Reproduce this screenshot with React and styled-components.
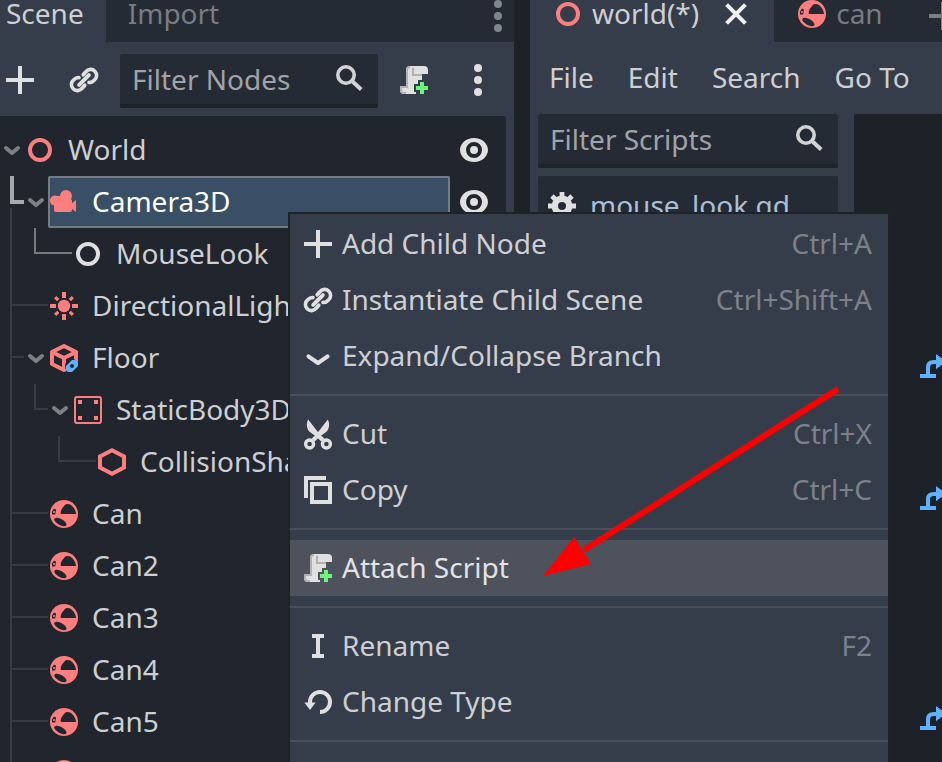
import React from "react";
import styled, { createGlobalStyle } from "styled-components";

const c = {
  base: "#363d4a",
  tabs: "#252b34",
  tree: "#21262e",
  deep: "#1d2229",
  edge: "#1e2328",
  text: "#cdcfd2",
  dim: "#787c83",
  hint: "#a0a3a7",
  icon: "#e0e0e0",
  red: "#fc7f7f",
  guide: "#373b43",
  guideLit: "#75797f",
};

const GlobalStyle = createGlobalStyle`
  *, *::before, *::after { box-sizing: border-box; }
  html, body { margin: 0; background: ${c.deep}; }
  body, button, input {
    font-family: "Noto Sans", "Open Sans", sans-serif;
    font-size: 28px;
    line-height: 38px;
    color: ${c.text};
  }
  button { border: 0; padding: 0; background: none; cursor: pointer; }
  ul { list-style: none; margin: 0; padding: 0; }
`;

/* ---------- icons ---------- */

const Svg = styled.svg`
  display: block;
  flex: none;
  width: 32px;
  height: 32px;
`;

const Icon = ({ children, color = c.icon, ...rest }) => (
  <Svg viewBox="0 0 16 16" fill={color} aria-hidden="true" {...rest}>
    {children}
  </Svg>
);

const AddIcon = (p) => (
  <Icon {...p}><path d="M7 1v6H1v2h6v6h2V9h6V7H9V1z" /></Icon>
);

const LinkIcon = () => (
  <Icon>
    <g fill="none" stroke={c.icon} strokeWidth="2" strokeLinecap="round">
      <path d="M7.6 5.4 8.9 3.9a3 3 0 1 1 4.2 4.2q-1.2 1.3-2.6 1.1" strokeWidth="1.8" />
      <path d="M8.4 10.6 7.1 12.1a3 3 0 1 1-4.2-4.2q1.2-1.3 2.6-1.1" strokeWidth="1.8" />
      <path d="M5.6 10.4 10.4 5.6" />
    </g>
  </Icon>
);

const SearchIcon = () => (
  <Icon>
    <g fill="none" stroke="#d2d3d4">
      <circle cx="6" cy="6" r="4.1" strokeWidth="1.8" />
      <path d="M9 9l4.6 4.2" strokeWidth="2" />
    </g>
  </Icon>
);

const ScriptCreateIcon = () => (
  <Icon>
    <path d="M6 1a2 2 0 0 0-2 2v8H1v2a2 2 0 0 0 2 2h6v-1H8v-4h2V8h2V5h3V3a2 2 0 0 0-2-2z" />
    <path
      fill="#b2b2b2"
      d="M6 1a2 2 0 0 0-2 2v8H1v2a2 2 0 0 0 2 2h1v-1H3a1 1 0 0 1-1-1v-1h3V3a1 1 0 0 1 1-1zM7 2v4h5V5H8V2z"
    />
    <path fill="#6bf57d" d="M11 9v2H9v2h2v2h2v-2h2v-2h-2V9z" />
  </Icon>
);

const DotsIcon = (p) => (
  <Icon {...p}>
    <circle cx="8" cy="2" r="2" />
    <circle cx="8" cy="8" r="2" />
    <circle cx="8" cy="14" r="2" />
  </Icon>
);

const CloseIcon = () => (
  <Icon><path d="M3.3 3.3l9.4 9.4M12.7 3.3l-9.4 9.4" stroke="#f0f0f0" strokeWidth="2" /></Icon>
);

const EyeIcon = () => (
  <Icon>
    <path
      fillRule="evenodd"
      d="M8 2C4 2 1 4.8 1 8s3 6 7 6 7-2.8 7-6-3-6-7-6zm0 2a4 4 0 1 1 0 8 4 4 0 0 1 0-8z"
    />
    <circle cx="8" cy="8" r="2" />
  </Icon>
);

const NodeIcon = ({ color = c.icon }) => (
  <Icon color="none"><circle cx="8" cy="8" r="5" stroke={color} strokeWidth="2" /></Icon>
);

const CameraIcon = () => (
  <Icon color={c.red}>
    <circle cx="9" cy="5" r="3" />
    <circle cx="3.5" cy="7.3" r="2.5" />
    <path d="M3 9l1-4h5l3 2v5a1 1 0 0 1-1 1H4a1 1 0 0 1-1-1z" />
    <path d="M11.5 9 14 7v6l-2.500-2z" />
  </Icon>
);

const LightIcon = () => (
  <Icon color={c.red}>
    <circle cx="8" cy="8" r="3.1" />
    <path d="M7 1h2v3H7zM7 12h2v3H7zM1 7h3v2H1zM12 7h3v2h-3z" />
    <path
      d="M3.6 3.6l1.500 1.500M12.400 3.600l-1.500 1.500M3.600 12.400l1.500-1.500M12.400 12.400l-1.500-1.500"
      stroke={c.red}
      strokeWidth="1.600"
    />
  </Icon>
);

const CubeIcon = () => (
  <Icon>
    <path
      d="M8 2l6 3v6l-6 3-6-3V5zM2 5l6 3 6-3M8 8v6"
      fill="none"
      stroke={c.red}
      strokeWidth="2"
      strokeLinejoin="round"
    />
    <circle cx="12" cy="12" r="3.5" fill={c.tree} />
    <path
      fill="#5fb2ff"
      fillRule="evenodd"
      d="M12 9h1.500a1.500 1.500 0 0 1 1.500 1.500V12l-3 3h-1.500A1.500 1.500 0 0 1 9 13.500V12zm0 2a1 1 0 1 0 0 2 1 1 0 0 0 0-2z"
    />
  </Icon>
);

const StaticBodyIcon = () => (
  <Icon color={c.red}>
    <rect x="1.5" y="1.5" width="13" height="13" rx="1" fill="none" stroke={c.red} />
    <path d="M3 3h2v2H3zM11 3h2v2h-2zM3 11h2v2H3zM11 11h2v2h-2z" />
  </Icon>
);

const CollisionIcon = () => (
  <Icon color="none">
    <path d="M8 2.1l6 3.1v5.6l-6 3.1-6-3.1V5.2z" stroke={c.red} strokeWidth="2" />
  </Icon>
);

const RigidBodyIcon = ({ ground = c.tree }) => (
  <Icon color={c.red}>
    <circle cx="8" cy="8" r="7" />
    <g fill={ground}>
      <path d="M6.4 8C6 6 7.6 4.600 8.500 3.400c.6-.6 2-.6 2.800 0C13 4.600 13.900 6.400 14 8z" />
      <ellipse cx="6.200" cy="12" rx="3.400" ry="1.500" transform="rotate(28 6.200 12)" />
      <path d="M2 8.300V6.700l1-1.500 1 .6-.4 2.500z" />
    </g>
    <circle cx="3" cy="7" r=".5" />
  </Icon>
);

const CutIcon = () => (
  <Icon>
    <path d="M3.1.7C1.9 2.9 2.3 5.7 4.3 7.3L7 9.3l2.7 2.5 1.5-1.5-2.3-2.1z" />
    <path d="M12.9.7c1.2 2.2.8 5-1.2 6.6L9 9.3l-2.7 2.5-1.5-1.5 2.3-2.1z" />
    <g fill="none" stroke={c.icon} strokeWidth="1.7">
      <circle cx="3.8" cy="13" r="2" />
      <circle cx="12.2" cy="13" r="2" />
    </g>
  </Icon>
);

const CopyIcon = () => (
  <Icon color="none">
    <path d="M2 12V2h10" stroke={c.icon} strokeWidth="2" />
    <rect x="5" y="5" width="9" height="9" stroke={c.icon} strokeWidth="2" />
  </Icon>
);

const ChevronIcon = () => (
  <Icon color="none">
    <path d="M3.2 8.2 8 11.5l4.8-3.3" stroke={c.icon} strokeWidth="2" strokeLinecap="round" strokeLinejoin="round" />
  </Icon>
);

const RenameIcon = () => (
  <Icon><path d="M5 2h6v2H9v8h2v2H5v-2h2V4H5z" /></Icon>
);

const ReloadIcon = () => (
  <Icon>
    <path d="M9 13A5 5 0 1 0 4 8v1" fill="none" stroke={c.icon} strokeWidth="2" />
    <path d="M1.2 8.3h5.6L4 12z" />
  </Icon>
);

const GearIcon = () => (
  <Icon>
    <path
      d="M8 1v3M8 12v3M1 8h3M12 8h3M3 3l2 2M11 11l2 2M3 13l2-2M11 5l2-2"
      stroke={c.icon}
      strokeWidth="2.4"
    />
    <circle cx="8" cy="8" r="3.6" fill="none" stroke={c.icon} strokeWidth="3.2" />
  </Icon>
);

const SignalIcon = () => (
  <Icon>
    <path d="M1 12h8v2H1z" fill="#5fb2ff" />
    <path d="M5 12V8.500Q5 6 8 6h1.500" fill="none" stroke="#5fb2ff" strokeWidth="2" />
    <path d="M9 2l5 3.800L9 9.600z" fill="#5fb2ff" />
  </Icon>
);

const FoldSvg = styled.svg`
  display: block;
  width: 24px;
  height: 24px;
`;

const FoldArrow = () => (
  <FoldSvg viewBox="0 0 24 24" fill="none" aria-hidden="true">
    <path d="M6 10l6 5 6-5" stroke="#7d8086" strokeWidth="4" strokeLinecap="round" strokeLinejoin="round" />
  </FoldSvg>
);

/* ---------- frame ---------- */

const Editor = styled.div`
  display: grid;
  grid-template-columns: minmax(0, 514fr) minmax(0, 412fr);
  column-gap: 16px;
  height: 100vh;
  overflow: hidden;
  background: ${c.deep};
`;

const Dock = styled.section`
  display: flex;
  flex-direction: column;
  min-width: 0;
  min-height: 0;
  overflow: hidden;
  background: ${c.base};
`;

const Label = styled.span`
  padding-bottom: 2px;
`;

const TabBar = styled.div`
  display: flex;
  flex: none;
  height: 42px;
  overflow: hidden;
  background: ${c.tabs};
`;

const Tab = styled.div`
  display: flex;
  flex: none;
  align-items: center;
  gap: 8px;
  padding: 0 22px 14px ${(p) => p.$start ?? 22}px;
  background: ${(p) => (p.$active ? c.base : "transparent")};
`;

const TabLabel = styled.button`
  display: flex;
  align-items: center;
  gap: 8px;
  height: 28px;
  white-space: nowrap;
  color: ${(p) => (p.$active ? c.text : c.dim)};
`;

const TabClose = styled.button`
  margin-left: 13px;
`;

const TabAction = styled.button`
  flex: none;
  height: 28px;
  margin-left: ${(p) => (p.$push ? "auto" : "22px")};
`;

const SceneTools = styled.div`
  display: flex;
  flex: none;
  gap: 12px;
  padding: 12px 8px 8px 0;
`;

const ToolButton = styled.button`
  display: flex;
  flex: none;
  align-items: center;
  justify-content: center;
  width: ${(p) => p.$width ?? 48}px;
  height: 52px;
  margin: ${(p) => (p.$flush ? "0 4px 0 -4px" : "0")};
`;

const SearchField = styled.label`
  display: flex;
  flex: 1 1 auto;
  align-items: center;
  min-width: 0;
  height: 54px;
  padding: 0 12px;
  border-bottom: 4px solid ${c.edge};
  border-radius: 2px;
  background: ${c.tabs};
`;

const SearchInput = styled.input`
  flex: 1;
  min-width: 0;
  height: 38px;
  padding: 0;
  border: 0;
  outline: 0;
  background: none;

  &::placeholder {
    color: ${c.hint};
    opacity: 1;
  }
`;

const Search = ({ label }) => (
  <SearchField>
    <SearchInput type="text" placeholder={label} aria-label={label} />
    <SearchIcon />
  </SearchField>
);

/* ---------- scene tree ---------- */

const Tree = styled.ul`
  flex: 1;
  min-height: 0;
  margin-right: 8px !important;
  padding-top: 8px !important;
  overflow: hidden;
  border-radius: 0 2px 0 0;
  background: ${c.tree};
`;

const TreeRow = styled.li`
  display: flex;
  height: 52px;
`;

const Rail = styled.span`
  flex: none;
  width: 14px;
  margin-left: 10px;
  border-left: 2px solid ${(p) => (p.$line ? c.guide : "transparent")};
`;

const Elbow = styled.span`
  display: flex;
  flex: none;
  flex-direction: column;
  width: ${(p) => (p.$short ? 14 : 38)}px;
  margin-left: 10px;
`;

const Corner = styled.span`
  height: ${(p) => (p.$mark === "path" ? 28 : 26)}px;
  border: 0 solid ${(p) => (p.$mark === "path" ? "#a6a9ad" : p.$mark === "child" ? c.guideLit : c.guide)};
  border-width: ${(p) => (p.$mark === "path" ? "0 0 4px 4px" : "0 0 2px 2px")};
`;

const Trunk = styled.span`
  flex: 1;
  margin-top: ${(p) => (p.$gap ? 4 : 0)}px;
  border-left: 2px solid ${c.guide};
`;

const Fold = styled.button`
  display: flex;
  flex: none;
  align-items: center;
  width: 24px;
`;

const Item = styled.div`
  display: flex;
  flex: 1;
  align-items: center;
  gap: 12px;
  min-width: 0;
  overflow: hidden;
  white-space: nowrap;
  color: ${(p) => (p.$selected ? "#ffffff" : c.text)};
  background: ${(p) => (p.$selected ? "#384f66" : "transparent")};
  border-radius: 2px;
  outline: ${(p) => (p.$selected ? "2px solid #777c84" : "0")};
  outline-offset: -2px;
`;

const Visibility = styled.button`
  display: flex;
  flex: none;
  align-items: center;
  width: 56px;
  padding-left: 8px;
`;

const nodes = [
  { name: "World", depth: 0, fold: true, icon: <NodeIcon color={c.red} />, eye: true },
  { name: "Camera3D", depth: 1, fold: true, icon: <CameraIcon />, eye: true, selected: true, mark: "path" },
  { name: "MouseLook", depth: 2, icon: <NodeIcon />, mark: "child" },
  { name: "DirectionalLight3D", depth: 1, icon: <LightIcon /> },
  { name: "Floor", depth: 1, fold: true, icon: <CubeIcon /> },
  { name: "StaticBody3D", depth: 2, fold: true, icon: <StaticBodyIcon /> },
  { name: "CollisionShape3D", depth: 3, icon: <CollisionIcon /> },
  ...["Can", "Can2", "Can3", "Can4", "Can5", "Can6"].map((name) => ({
    name,
    depth: 1,
    icon: <RigidBodyIcon />,
  })),
];

const TreeNode = ({ name, depth, fold, icon, eye, selected, mark }) => (
  <TreeRow>
    {Array.from({ length: Math.max(0, depth - 1) }, (_, i) => (
      <Rail key={i} $line={i === 0} />
    ))}
    {depth > 0 && (
      <Elbow $short={fold}>
        <Corner $mark={mark} />
        {depth === 1 && <Trunk $gap={mark === "path"} />}
      </Elbow>
    )}
    {fold && (
      <Fold aria-label={`Collapse ${name}`}>
        <FoldArrow />
      </Fold>
    )}
    <Item $selected={selected}>
      {icon}
      <Label>{name}</Label>
    </Item>
    <Visibility aria-label={`Toggle visibility of ${name}`}>{eye && <EyeIcon />}</Visibility>
  </TreeRow>
);

/* ---------- script editor ---------- */

const MenuBar = styled.nav`
  display: flex;
  flex: none;
  height: 72px;
  padding-left: 2px;
  overflow: hidden;
`;

const MenuTitle = styled.button`
  flex: none;
  height: 70px;
  padding: 0 17px;
  white-space: nowrap;
`;

const Workspace = styled.div`
  display: grid;
  grid-template-columns: minmax(0, 300fr) minmax(0, 88fr);
  flex: 1;
  gap: 16px;
  min-height: 0;
  padding-left: 8px;
`;

const ScriptColumn = styled.div`
  display: flex;
  flex-direction: column;
  gap: 8px;
  min-width: 0;

  ${SearchField} {
    flex: none;
  }
`;

const ScriptList = styled.ul`
  flex: 1;
  overflow: hidden;
  border-radius: 2px;
  background: ${c.tabs};
`;

const ScriptEntry = styled.li`
  display: flex;
  align-items: center;
  gap: 12px;
  height: 60px;
  padding-left: 8px;
  white-space: nowrap;
  color: #a9c0da;
`;

const CodeArea = styled.ol`
  margin: 0;
  padding: 10px 0 0;
  overflow: hidden;
  list-style: none;
  border-radius: 2px 0 0 0;
  background: ${c.deep};
`;

const CodeLine = styled.li`
  display: flex;
  align-items: center;
  height: 44px;
  padding-left: 64px;
`;

const signalLines = [5, 8, 13];

/* ---------- context menu ---------- */

const ContextMenu = styled.ul`
  position: absolute;
  top: 212px;
  left: 288px;
  width: 602px;
  height: calc(100vh - 212px);
  overflow: hidden;
  border: 2px solid ${c.edge};
  border-bottom: 0;
  padding-top: 2px !important;
  background: ${c.base};
`;

const MenuItem = styled.button`
  display: flex;
  align-items: center;
  gap: 8px;
  width: 100%;
  height: 56px;
  padding: 0 16px 0 12px;
  white-space: nowrap;
  text-align: left;
  color: ${(p) => (p.$hover ? "#e1e2e4" : c.text)};
  background: ${(p) => (p.$hover ? "#4d525d" : "transparent")};
`;

const Shortcut = styled(Label)`
  margin-left: auto;
  color: #7d8189;
`;

const Divider = styled.li`
  height: 22px;
  padding-top: 10px;

  &::before {
    content: "";
    display: block;
    height: 2px;
    background: #4a505c;
  }
`;

const menu = [
  { label: "Add Child Node", keys: "Ctrl+A", icon: <AddIcon /> },
  { label: "Instantiate Child Scene", keys: "Ctrl+Shift+A", icon: <LinkIcon /> },
  { label: "Expand/Collapse Branch", icon: <ChevronIcon /> },
  null,
  { label: "Cut", keys: "Ctrl+X", icon: <CutIcon /> },
  { label: "Copy", keys: "Ctrl+C", icon: <CopyIcon /> },
  null,
  { label: "Attach Script", icon: <ScriptCreateIcon />, hover: true },
  null,
  { label: "Rename", keys: "F2", icon: <RenameIcon /> },
  { label: "Change Type", icon: <ReloadIcon /> },
  null,
];

const Pointer = styled.svg`
  position: absolute;
  top: 380px;
  left: 540px;
  width: 304px;
  height: 200px;
  pointer-events: none;
`;

export default function App() {
  return (
    <>
      <GlobalStyle />
      <Editor>
        <Dock>
          <TabBar>
            <Tab $active $start={6}>
              <TabLabel $active><Label>Scene</Label></TabLabel>
            </Tab>
            <Tab>
              <TabLabel><Label>Import</Label></TabLabel>
            </Tab>
            <TabAction $push aria-label="Dock options">
              <DotsIcon color="#82868c" />
            </TabAction>
          </TabBar>
          <SceneTools>
            <ToolButton $flush aria-label="Add node"><AddIcon /></ToolButton>
            <ToolButton aria-label="Instantiate scene"><LinkIcon /></ToolButton>
            <Search label="Filter Nodes" />
            <ToolButton aria-label="Attach script"><ScriptCreateIcon /></ToolButton>
            <ToolButton $width={56} aria-label="More options"><DotsIcon /></ToolButton>
          </SceneTools>
          <Tree>
            {nodes.map((node) => (
              <TreeNode key={node.name} {...node} />
            ))}
          </Tree>
        </Dock>

        <Dock>
          <TabBar>
            <Tab $active>
              <TabLabel $active>
                <NodeIcon color={c.red} />
                <Label>world(*)</Label>
              </TabLabel>
              <TabClose aria-label="Close world"><CloseIcon /></TabClose>
            </Tab>
            <Tab>
              <TabLabel>
                <RigidBodyIcon ground={c.tabs} />
                <Label>can</Label>
              </TabLabel>
            </Tab>
            <TabAction aria-label="Add scene tab">
              <AddIcon color="#7d8080" />
            </TabAction>
          </TabBar>
          <MenuBar>
            {["File", "Edit", "Search", "Go To"].map((title) => (
              <MenuTitle key={title}>{title}</MenuTitle>
            ))}
          </MenuBar>
          <Workspace>
            <ScriptColumn>
              <Search label="Filter Scripts" />
              <ScriptList>
                <ScriptEntry>
                  <GearIcon />
                  <Label>mouse_look.gd</Label>
                </ScriptEntry>
              </ScriptList>
            </ScriptColumn>
            <CodeArea>
              {Array.from({ length: 15 }, (_, i) => (
                <CodeLine key={i}>{signalLines.includes(i) && <SignalIcon />}</CodeLine>
              ))}
            </CodeArea>
          </Workspace>
        </Dock>
      </Editor>

      <ContextMenu>
        {menu.map((entry, i) =>
          entry ? (
            <li key={entry.label}>
              <MenuItem $hover={entry.hover}>
                {entry.icon}
                <Label>{entry.label}</Label>
                {entry.keys && <Shortcut>{entry.keys}</Shortcut>}
              </MenuItem>
            </li>
          ) : (
            <Divider key={i} />
          )
        )}
      </ContextMenu>

      <Pointer viewBox="0 0 304 200" aria-hidden="true">
        <path d="M298 9L44 170" stroke="#ff0000" strokeWidth="6" />
        <path d="M3 196L34 157L51 184z" fill="#ff0000" />
      </Pointer>
    </>
  );
}
